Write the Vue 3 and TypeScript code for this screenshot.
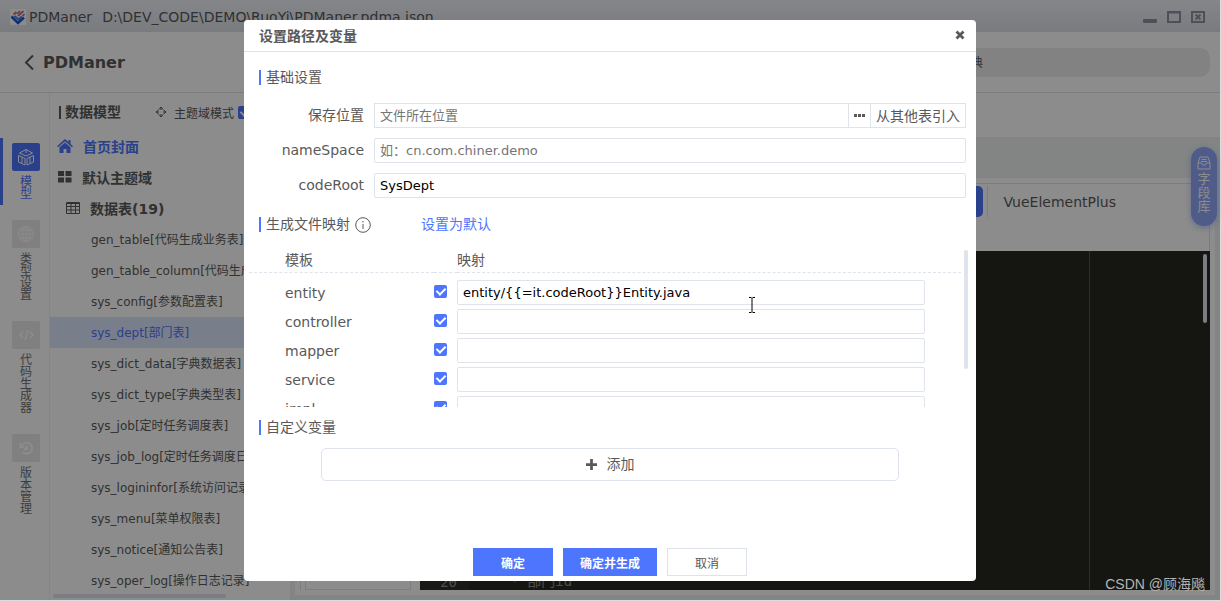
<script setup lang="ts">
import { ref } from 'vue'

interface NavItem {
  label: string
  icon: string
  active?: boolean
}

interface Mapping {
  name: string
  enabled: boolean
  path: string
}

const navItems: NavItem[] = [
  { label: '模型', icon: 'cube', active: true },
  { label: '类型设置', icon: 'globe' },
  { label: '代码生成器', icon: 'code' },
  { label: '版本管理', icon: 'history' },
]

const tables: string[] = [
  'gen_table[代码生成业务表]',
  'gen_table_column[代码生成业务表字段]',
  'sys_config[参数配置表]',
  'sys_dept[部门表]',
  'sys_dict_data[字典数据表]',
  'sys_dict_type[字典类型表]',
  'sys_job[定时任务调度表]',
  'sys_job_log[定时任务调度日志表]',
  'sys_logininfor[系统访问记录]',
  'sys_menu[菜单权限表]',
  'sys_notice[通知公告表]',
  'sys_oper_log[操作日志记录]',
]
const selected = ref('sys_dept[部门表]')

const domainMode = ref(true)
const savePath = ref('')
const nameSpace = ref('')
const codeRoot = ref('SysDept')
const mappings = ref<Mapping[]>([
  { name: 'entity', enabled: true, path: 'entity/{{=it.codeRoot}}Entity.java' },
  { name: 'controller', enabled: true, path: '' },
  { name: 'mapper', enabled: true, path: '' },
  { name: 'service', enabled: true, path: '' },
  { name: 'impl', enabled: true, path: '' },
])
</script>

<template>
  <div class="app">
    <header class="titlebar">
      <svg class="logo" viewBox="0 0 16 16" aria-hidden="true">
        <rect width="16" height="16" fill="#fff" />
        <g fill="none" stroke-width="2">
          <path d="M1.500 7.500L8 14l6-5.500" stroke="#2257c9" stroke-width="2.600" />
          <path d="M4.500 7l4 3.500L12 7.500" stroke="#3f7cf0" />
          <path d="M3.500 5.500L6.500 3M8 7l5.500-5" stroke="#e26a5a" />
          <path d="M7 5l3-3M12.500 7L14.500 5" stroke="#4b86ef" stroke-width="1.600" />
        </g>
      </svg>
      <span class="app-name">PDManer</span>
      <span class="file-path">D:\DEV_CODE\DEMO\RuoYi\PDManer.pdma.json</span>
      <div class="window-buttons">
        <button type="button" aria-label="最小化">
          <svg viewBox="0 0 14 14"><rect y="9" width="14" height="4" rx="1" fill="#8f93a2" /></svg>
        </button>
        <button type="button" aria-label="最大化">
          <svg viewBox="0 0 14 14"><path d="M1 2h12v10H1zM0 2.500h14" fill="none" stroke="#8f93a2" stroke-width="2" /></svg>
        </button>
        <button type="button" aria-label="关闭窗口">
          <svg viewBox="0 0 14 14"><path d="M1 2h12v10H1z" fill="none" stroke="#8f93a2" stroke-width="2" /><path d="M4.500 4.500l5 5M9.500 4.500l-5 5" stroke="#8f93a2" stroke-width="2" /></svg>
        </button>
      </div>
    </header>

    <div class="project-bar">
      <button type="button" class="back" aria-label="返回">
        <svg viewBox="0 0 10 16"><path d="M9 1.500L2 8.500l7 7" fill="none" stroke="#595959" stroke-width="2" /></svg>
      </button>
      <h1>PDManer</h1>
      <div class="search">典</div>
    </div>

    <div class="workspace">
      <nav class="rail">
        <a v-for="item in navItems" :key="item.label" href="#" class="rail-item" :class="{ active: item.active }">
          <span class="rail-icon">
            <svg v-if="item.icon === 'cube'" viewBox="0 0 18 18"><path d="M2.500 5L9 1.500 15.500 5 9 8zM1.500 7.500v6.500L8 17v-6.500zM16.500 7.500v6.500L10 17v-6.500zM5 9.500V15M13 9.500V15M9 1.500V5" /></svg>
            <svg v-else-if="item.icon === 'globe'" viewBox="0 0 18 18"><circle cx="9" cy="9" r="7.500" /><ellipse cx="9" cy="9" rx="3.500" ry="7.500" /><path d="M1.500 9h15M9 1.500v15M3 5h12M3 13h12" /></svg>
            <svg v-else-if="item.icon === 'code'" viewBox="0 0 18 18"><path d="M6 5.500L3 9l3 3.500M13 5.500L16 9l-3 3.500M11 4L8 14" stroke-width="1.500" /></svg>
            <svg v-else viewBox="0 0 18 18"><path d="M5.500 5.500a5.500 5.500 0 1 1 0 7.500M10 6.500v3.500H7" stroke-width="2" /><path d="M2.500 3v6h6z" fill="#fff" stroke="none" /></svg>
          </span>
          <span class="rail-label">{{ item.label }}</span>
        </a>
      </nav>

      <aside class="tree">
        <div class="tree-head">
          <strong>数据模型</strong>
          <svg class="target" viewBox="0 0 12 12"><path d="M4 3.500L6 1l2 2.500M4 8.500L6 11l2-2.500M3.500 4L1 6l2.500 2M8.500 4L11 6 8.500 8M6 1v3M6 8v3M1 6h3M8 6h3" /></svg>
          <label for="domain-mode">主题域模式</label>
          <input id="domain-mode" v-model="domainMode" type="checkbox" class="check" />
        </div>
        <ul>
          <li class="group home">
            <svg viewBox="0 0 16 14"><path d="M8 0l3.500 3.100V1h2v4L16 7.200l-1 1.100L8 2.200 1 8.300 0 7.200zM8 3.500l5.500 4.700V14H9.500v-4h-3v4h-4V8.200z" fill="#4e75fd" /></svg>
            <span>首页封面</span>
          </li>
          <li class="group">
            <svg viewBox="0 0 14 12"><path d="M0 0h6v5H0zM7.500 0h6v5h-6zM0 6.500h6v5H0zM7.500 6.500h6v5h-6z" fill="#595959" /></svg>
            <span>默认主题域</span>
          </li>
          <li class="group nested">
            <svg viewBox="0 0 14 12"><path d="M.5 .5h13v11H.5zM.5 1.500h13M.5 4.500h13M.5 8h13M5 1v10M9.500 1v10" fill="none" stroke="#595959" /></svg>
            <span>数据表(19)</span>
          </li>
          <li
            v-for="name in tables"
            :key="name"
            class="leaf"
            :class="{ selected: name === selected }"
            @click="selected = name"
          >{{ name }}</li>
        </ul>
        <div class="tree-scroll"></div>
      </aside>

      <main class="content">
        <div class="toolbar"></div>
        <div class="tabstrip"></div>
        <section class="sheet">
          <div class="sheet-inner">
            <div class="templates">
              <button type="button">选择代码模板</button>
            </div>
            <div class="preview">
              <div class="preview-tabs">
                <button type="button" class="tab current">Entity</button>
                <button type="button" class="tab">VueElementPlus</button>
              </div>
              <div class="editor">
                <div class="gutter">20</div>
                <pre class="code"> * 部门id</pre>
                <div class="ruler"></div>
                <div class="editor-scroll"></div>
              </div>
            </div>
          </div>
        </section>
      </main>
    </div>

    <button type="button" class="field-library">
      <svg viewBox="0 0 14 14"><path d="M3 1h8l2 6v6H1V7zM1 7h3.500l1 2h3l1-2H13M4.500 3.500h5M4 5.500h6" fill="none" stroke="#fff" /></svg>
      <span>字段库</span>
    </button>

    <div class="mask">
      <section class="dialog" role="dialog" aria-labelledby="dialog-title">
        <header class="dialog-head">
          <h2 id="dialog-title">设置路径及变量</h2>
          <button type="button" aria-label="关闭">
            <svg viewBox="0 0 10 10"><path d="M1.500 1.500l7 7M8.500 1.500l-7 7" stroke="#595959" stroke-width="2.800" /></svg>
          </button>
        </header>

        <div class="dialog-body">
          <h3 class="section-title">基础设置</h3>
          <div class="form">
            <label for="save-path">保存位置</label>
            <div class="path-group">
              <input id="save-path" v-model="savePath" type="text" placeholder="文件所在位置" />
              <button type="button" class="browse" aria-label="浏览">
                <svg viewBox="0 0 12 4"><path d="M0 0h3v3H0zM4 0h3v3H4zM8 0h3v3H8z" fill="#595959" /></svg>
              </button>
              <button type="button" class="import">从其他表引入</button>
            </div>
            <label for="name-space">nameSpace</label>
            <input id="name-space" v-model="nameSpace" type="text" placeholder="如：cn.com.chiner.demo" />
            <label for="code-root">codeRoot</label>
            <input id="code-root" v-model="codeRoot" type="text" />
          </div>

          <div class="mapping-title">
            <h3 class="section-title">生成文件映射</h3>
            <svg class="info" viewBox="0 0 16 16"><circle cx="8" cy="8" r="7.300" fill="none" stroke="#595959" /><path d="M8 7v5M8 4v1.500" stroke="#595959" /></svg>
            <a href="#">设置为默认</a>
          </div>

          <div class="mapping">
            <div class="mapping-view">
              <table>
                <thead>
                  <tr>
                    <th class="col-name">模板</th>
                    <th class="col-check"></th>
                    <th class="col-path">映射</th>
                  </tr>
                </thead>
                <tbody>
                  <tr v-for="row in mappings" :key="row.name">
                    <td class="col-name">{{ row.name }}</td>
                    <td class="col-check"><input v-model="row.enabled" type="checkbox" class="check" :aria-label="row.name" /></td>
                    <td class="col-path"><input v-model="row.path" type="text" :aria-label="row.name + ' 映射'" /></td>
                  </tr>
                </tbody>
              </table>
            </div>
            <div class="mapping-scroll"></div>
          </div>

          <h3 class="section-title custom-title">自定义变量</h3>
          <button type="button" class="add">
            <svg viewBox="0 0 12 12"><path d="M6 0v12M0 6h12" stroke="#595959" stroke-width="3" /></svg>
            <span>添加</span>
          </button>
        </div>

        <footer class="dialog-foot">
          <button type="button" class="primary">确定</button>
          <button type="button" class="primary">确定并生成</button>
          <button type="button">取消</button>
        </footer>
      </section>
    </div>

    <svg class="pointer" viewBox="0 0 8 16" aria-hidden="true"><path d="M1 .5h2.500M4.500 .5H7M4 1v14M1 15.500h2.500M4.500 15.500H7" fill="none" stroke="#000" /></svg>
    <div class="watermark">CSDN @顾海飚</div>
  </div>
</template>

<style>
body {
  margin: 0;
  background: #dcdcdc;
}
</style>

<style scoped>
* {
  box-sizing: border-box;
}

.app {
  position: relative;
  display: flex;
  flex-direction: column;
  height: 100vh;
  padding: 0 1px 1px 0;
  overflow: hidden;
  color: #595959;
  font-family: "DejaVu Sans", "Noto Sans CJK SC", sans-serif;
  font-size: 14px;
}

button,
input {
  font-family: inherit;
}

button {
  padding: 0;
  border: 0;
  background: none;
  color: inherit;
}

a {
  color: #4e75fd;
  text-decoration: none;
}

h1,
h2,
h3,
ul,
pre {
  margin: 0;
  padding: 0;
}

svg {
  display: block;
}

input[type="text"] {
  width: 100%;
  min-width: 0;
  height: 25px;
  padding: 0 5px;
  border: 1px solid #dfe3eb;
  border-radius: 2px;
  background: #fff;
  color: #000;
  font-size: 13px;
}

input::placeholder {
  color: #757575;
}

.check {
  display: grid;
  place-items: center;
  flex: none;
  width: 13px;
  height: 13px;
  margin: 0;
  border-radius: 2px;
  background: #4e75fd;
  appearance: none;
}

.check:checked::after {
  content: "";
  width: 4px;
  height: 7px;
  margin-bottom: 2px;
  border: solid #fff;
  border-width: 0 2px 2px 0;
  transform: rotate(45deg);
}

.titlebar {
  display: flex;
  flex: none;
  align-items: center;
  height: 32px;
  padding: 2px 15px 0 10px;
  background: linear-gradient(#f2f4fa, #dde0e5);
}

.logo {
  width: 16px;
  height: 16px;
  margin-right: 3px;
}

.file-path {
  margin-left: 10px;
}

.window-buttons {
  display: flex;
  gap: 10px;
  margin-left: auto;
}

.window-buttons svg {
  width: 14px;
  height: 14px;
}

.project-bar {
  display: flex;
  flex: none;
  align-items: center;
  height: 61px;
  padding: 0 10px 0 24px;
  border-bottom: 1px solid #dfe3eb;
  background: #fff;
}

.back svg {
  width: 10px;
  height: 16px;
}

h1 {
  margin-left: 9px;
  font-size: 16px;
}

.search {
  width: 247px;
  height: 29px;
  margin-left: auto;
  padding-left: 8px;
  border-radius: 10px;
  background: #ededed;
  font-size: 12px;
  line-height: 31px;
}

.workspace {
  display: flex;
  flex: 1;
  min-height: 0;
  background: #fff;
}

.rail {
  display: flex;
  flex: none;
  flex-direction: column;
  gap: 10px;
  width: 50px;
  padding-top: 45px;
  border-right: 1px solid #f0f1f5;
}

.rail-item {
  display: flex;
  flex-direction: column;
  align-items: center;
  gap: 5px;
  padding: 5px 0;
  border-left: 3px solid transparent;
  color: #707070;
}

.rail-item.active {
  border-left-color: #4e75fd;
  color: #4e75fd;
}

.rail-icon {
  display: grid;
  place-items: center;
  width: 28px;
  height: 28px;
  border-radius: 2px;
  background: #e9e9e9;
}

.active .rail-icon {
  background: #4e75fd;
}

.rail-icon svg {
  width: 18px;
  height: 18px;
  fill: none;
  stroke: #fff;
}

.rail-label {
  width: 12px;
  font-size: 12px;
  line-height: 12px;
}

.tree {
  flex: none;
  width: 240px;
  overflow: hidden;
}

.tree-head {
  display: flex;
  align-items: center;
  height: 38px;
  padding-left: 9px;
}

.tree-head strong {
  padding-left: 4px;
  border-left: 2px solid #595959;
  line-height: 13px;
}

.target {
  width: 12px;
  height: 12px;
  margin: 0 7px 0 34px;
  fill: none;
  stroke: #595959;
}

.tree-head label {
  margin-right: 4px;
  font-size: 12px;
}

.tree ul {
  height: 463px;
  overflow: hidden;
  list-style: none;
}

.tree li {
  display: flex;
  align-items: center;
  height: 31px;
  padding-bottom: 2px;
  white-space: nowrap;
}

.group {
  gap: 10px;
  padding-left: 8px;
  font-weight: bold;
}

.group svg {
  width: 14px;
  height: 12px;
}

.home {
  padding-left: 7px;
  color: #4e75fd;
}

.home svg {
  width: 16px;
  height: 14px;
}

.nested {
  padding-left: 16px;
}

.leaf {
  padding-left: 41px;
  font-size: 12px;
}

.leaf.selected {
  background: #dce6fd;
  color: #4e75fd;
}

.tree-scroll {
  width: 173px;
  height: 4px;
  margin-left: 3px;
  border-radius: 2px;
  background: #dfe3eb;
}

.content {
  display: flex;
  flex: 1;
  flex-direction: column;
  min-width: 0;
}

.toolbar {
  flex: none;
  height: 44px;
}

.tabstrip {
  flex: none;
  height: 41px;
  background: #eef2f0;
}

.sheet {
  display: flex;
  flex: 1;
  min-height: 0;
  padding: 5px;
  border: solid #eef2f0;
  border-width: 0 5px 5px;
}

.sheet-inner {
  display: flex;
  flex: 1;
  min-width: 0;
  border: 1px solid #dfe3eb;
  border-bottom: 0;
}

.templates {
  display: flex;
  flex: none;
  align-items: flex-end;
  width: 119px;
  padding-left: 4px;
}

.templates button {
  width: 106px;
  height: 32px;
  border: 1px solid #dfe3eb;
  font-size: 12px;
}

.preview {
  display: flex;
  flex: 1;
  flex-direction: column;
  min-width: 0;
}

.preview-tabs {
  display: flex;
  flex: none;
  align-items: flex-start;
  justify-content: flex-end;
  height: 67px;
  padding: 2px 73px 0 0;
}

.tab {
  height: 31px;
  padding: 0 20px 0 15px;
  font-size: 14px;
}

.tab.current {
  margin-right: 4px;
  border-radius: 5px;
  background: #4e75fd;
  color: #fff;
}

.tab + .tab {
  border-left: 1px solid #dfe3eb;
}

.editor {
  display: flex;
  flex: 1;
  margin-right: -1px;
  background: #272822;
  color: #8f908a;
  font-family: "DejaVu Sans Mono", "Noto Sans CJK SC", monospace;
  font-size: 14px;
}

.gutter {
  display: flex;
  align-items: flex-end;
  justify-content: flex-end;
  width: 49px;
  padding-right: 12px;
  background: #2f3129;
}

.code {
  align-self: flex-end;
  flex: 1;
  padding-left: 33px;
  font-family: inherit;
}

.ruler {
  width: 1px;
  margin-right: 113px;
  background: #555651;
}

.editor-scroll {
  width: 4px;
  height: 69px;
  margin: 3px 3px 0 0;
  border-radius: 2px;
  background: #dfe3eb;
}

.field-library {
  position: absolute;
  top: 147px;
  right: 4px;
  display: flex;
  flex-direction: column;
  align-items: center;
  gap: 2px;
  width: 26px;
  height: 79px;
  padding-top: 9px;
  border-radius: 13px;
  background: #91a7f8;
  box-shadow: 0 2px 6px #4e75fd66;
  color: #fff;
}

.field-library svg {
  width: 14px;
  height: 14px;
}

.field-library span {
  width: 13px;
  font-size: 13px;
  line-height: 14px;
}

.mask {
  position: absolute;
  inset: 0 1px 1px 0;
  display: flex;
  justify-content: center;
  padding: 20px 0 19px;
  background: rgba(0, 0, 0, 0.45);
}

.dialog {
  display: flex;
  flex-direction: column;
  width: 60%;
  border-radius: 4px;
  background: #fff;
}

.dialog-head {
  display: flex;
  flex: none;
  align-items: center;
  justify-content: space-between;
  height: 32px;
  padding: 0 11px 2px 15px;
  border-bottom: 1px solid #dfe3eb;
}

.dialog-head h2 {
  font-size: 14px;
}

.dialog-head svg {
  width: 10px;
  height: 10px;
}

.dialog-body {
  flex: 1;
  padding: 18px 5px 0;
}

.section-title {
  margin-left: 10px;
  padding-left: 5px;
  border-left: 2px solid #4e75fd;
  font-size: 14px;
  font-weight: normal;
  line-height: 15px;
}

.form {
  display: grid;
  grid-template-columns: 105px 1fr;
  gap: 10px;
  align-items: center;
  margin: 18px 5px 19px 10px;
}

.form label {
  line-height: 25px;
  text-align: right;
}

.path-group {
  display: flex;
  height: 25px;
  border: 1px solid #dfe3eb;
}

.path-group input[type="text"] {
  flex: 1;
  height: 23px;
  border: 0;
}

.browse {
  display: grid;
  place-items: center;
  width: 22px;
  border-left: 1px solid #dfe3eb;
}

.browse svg {
  width: 12px;
  height: 4px;
}

.import {
  padding: 0 5px;
  border-left: 1px solid #dfe3eb;
  font-size: 14px;
  line-height: 22px;
}

.mapping-title {
  display: flex;
  align-items: center;
  height: 15px;
  margin-bottom: 18px;
}

.mapping-title a {
  line-height: 15px;
}

.info {
  width: 16px;
  height: 16px;
  margin: 0 50px 0 5px;
}

.mapping {
  display: flex;
  gap: 3px;
  margin-right: 3px;
}

.mapping-view {
  flex: 1;
  height: 157px;
  overflow: hidden;
}

table {
  width: 100%;
  border-spacing: 0;
  table-layout: fixed;
}

th {
  height: 23px;
  padding: 0 0 2px;
  border-bottom: 1px dashed #dfe3eb;
  font-weight: normal;
  line-height: 20px;
  text-align: left;
}

td {
  height: 29px;
  padding: 0;
}

tbody::before {
  content: "";
  display: block;
  height: 5px;
}

.col-name {
  width: 185px;
  padding-left: 36px;
}

.col-check {
  width: 23px;
  padding-bottom: 2px;
}

.col-path {
  padding-right: 36px;
}

.col-path input {
  display: block;
}

.mapping-scroll {
  width: 4px;
  height: 119px;
  border-radius: 2px;
  background: #dfe3eb;
}

.custom-title {
  margin-top: 13px;
  margin-bottom: 13px;
}

.add {
  display: flex;
  align-items: center;
  justify-content: center;
  gap: 10px;
  width: 80%;
  height: 33px;
  margin: 0 auto;
  border: 1px solid #dfe3eb;
  border-radius: 5px;
  font-size: 14px;
  line-height: 15px;
}

.add svg {
  width: 11px;
  height: 11px;
}

.dialog-foot {
  display: flex;
  flex: none;
  justify-content: center;
  gap: 10px;
  padding-bottom: 5px;
}

.dialog-foot button {
  min-width: 80px;
  height: 28px;
  padding: 0 16px;
  border: 1px solid #dfe3eb;
  font-size: 12px;
}

.dialog-foot .primary {
  border-color: #4e75fd;
  background: #4e75fd;
  color: #fff;
  font-weight: bold;
}

.pointer {
  position: absolute;
  top: 297px;
  left: 748px;
  width: 8px;
  height: 16px;
}

.watermark {
  position: absolute;
  right: 16px;
  bottom: 8px;
  color: #b4b4b4;
  font-family: "Liberation Sans", "Noto Sans CJK SC", sans-serif;
  font-size: 14px;
}
</style>
